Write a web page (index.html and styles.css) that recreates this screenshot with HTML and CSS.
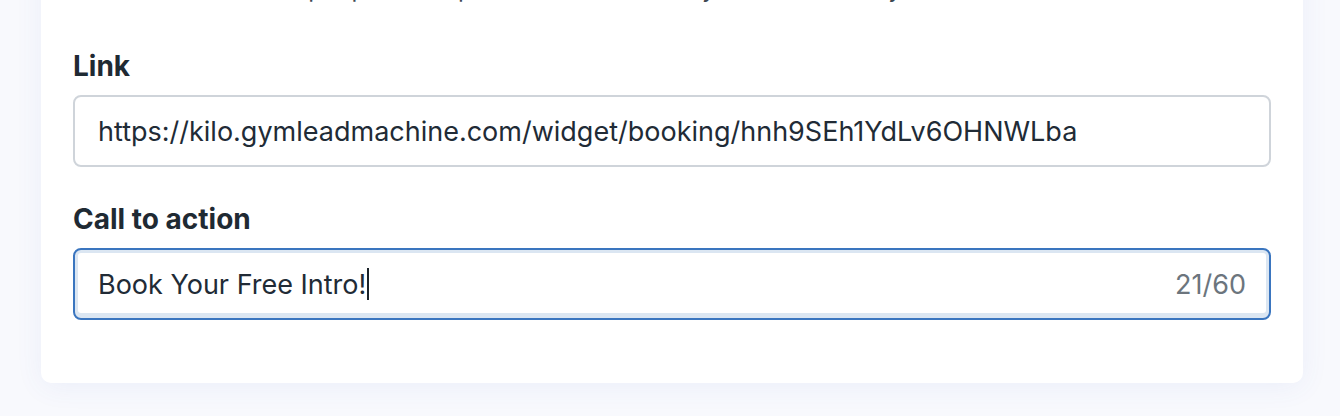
FILE: index.html
```html
<!DOCTYPE html>
<html lang="en">
<head>
  <meta charset="UTF-8">
  <title>Booking widget settings</title>
  <meta name="viewport" content="width=device-width, initial-scale=1.0">
  <link rel="stylesheet" href="styles.css">
</head>
<body>
  <div class="page">
    <div class="card">
      <p class="helper">This is where people will tap to see the times they can book with your team.</p>

      <div class="field">
        <label class="field-label" for="link">Link</label>
        <div class="field-input">
          <span class="field-value" id="link">https://kilo.gymleadmachine.com/widget/booking/hnh9SEh1YdLv6OHNWLba</span>
        </div>
      </div>

      <div class="field">
        <label class="field-label" for="cta">Call to action</label>
        <div class="field-input is-focused">
          <span class="field-value" id="cta">Book Your Free Intro!</span><span class="caret"></span>
          <span class="counter">21/60</span>
        </div>
      </div>
    </div>
  </div>
</body>
</html>
```

FILE: styles.css
```css
body {
  margin: 0;
  font-family: Inter, "Noto Sans", sans-serif;
  background: #f8f9fd;
  color: #212b36;
}

.page {
  padding: 0 37px 34px 41px;
  margin-top: -40px;
}

.card {
  background: #fff;
  border-radius: 0 0 10px 10px;
  box-shadow: 0 4px 28px rgba(70, 100, 200, 0.07);
  padding: 0 32px 63px;
}

.helper {
  margin: 0;
  padding: 13px 0 0 78px;
  font-size: 24px;
  line-height: 32px;
  color: #3d4852;
}

.field {
  margin-top: 44px;
}

.field + .field {
  margin-top: 35px;
}

.field-label {
  display: block;
  font-size: 28px;
  line-height: 34px;
  font-weight: 700;
  color: #1f2a33;
  margin-bottom: 12px;
}

.field-input {
  display: flex;
  align-items: center;
  height: 72px;
  box-sizing: border-box;
  padding: 0 23px 0 23px;
  border: 2px solid #cfd4da;
  border-radius: 8px;
  font-size: 27px;
}

.field-input.is-focused {
  border-color: #3a75bf;
  box-shadow: inset 0 0 0 3px #dbe6f2, inset 0 -2px 0 3px #dbe6f2;
}

.field-value {
  white-space: nowrap;
  color: #212b36;
}

.caret {
  display: inline-block;
  width: 2px;
  height: 32px;
  margin-left: 1px;
  background: #1a2229;
}

.counter {
  margin-left: auto;
  color: #6c757d;
}
```
